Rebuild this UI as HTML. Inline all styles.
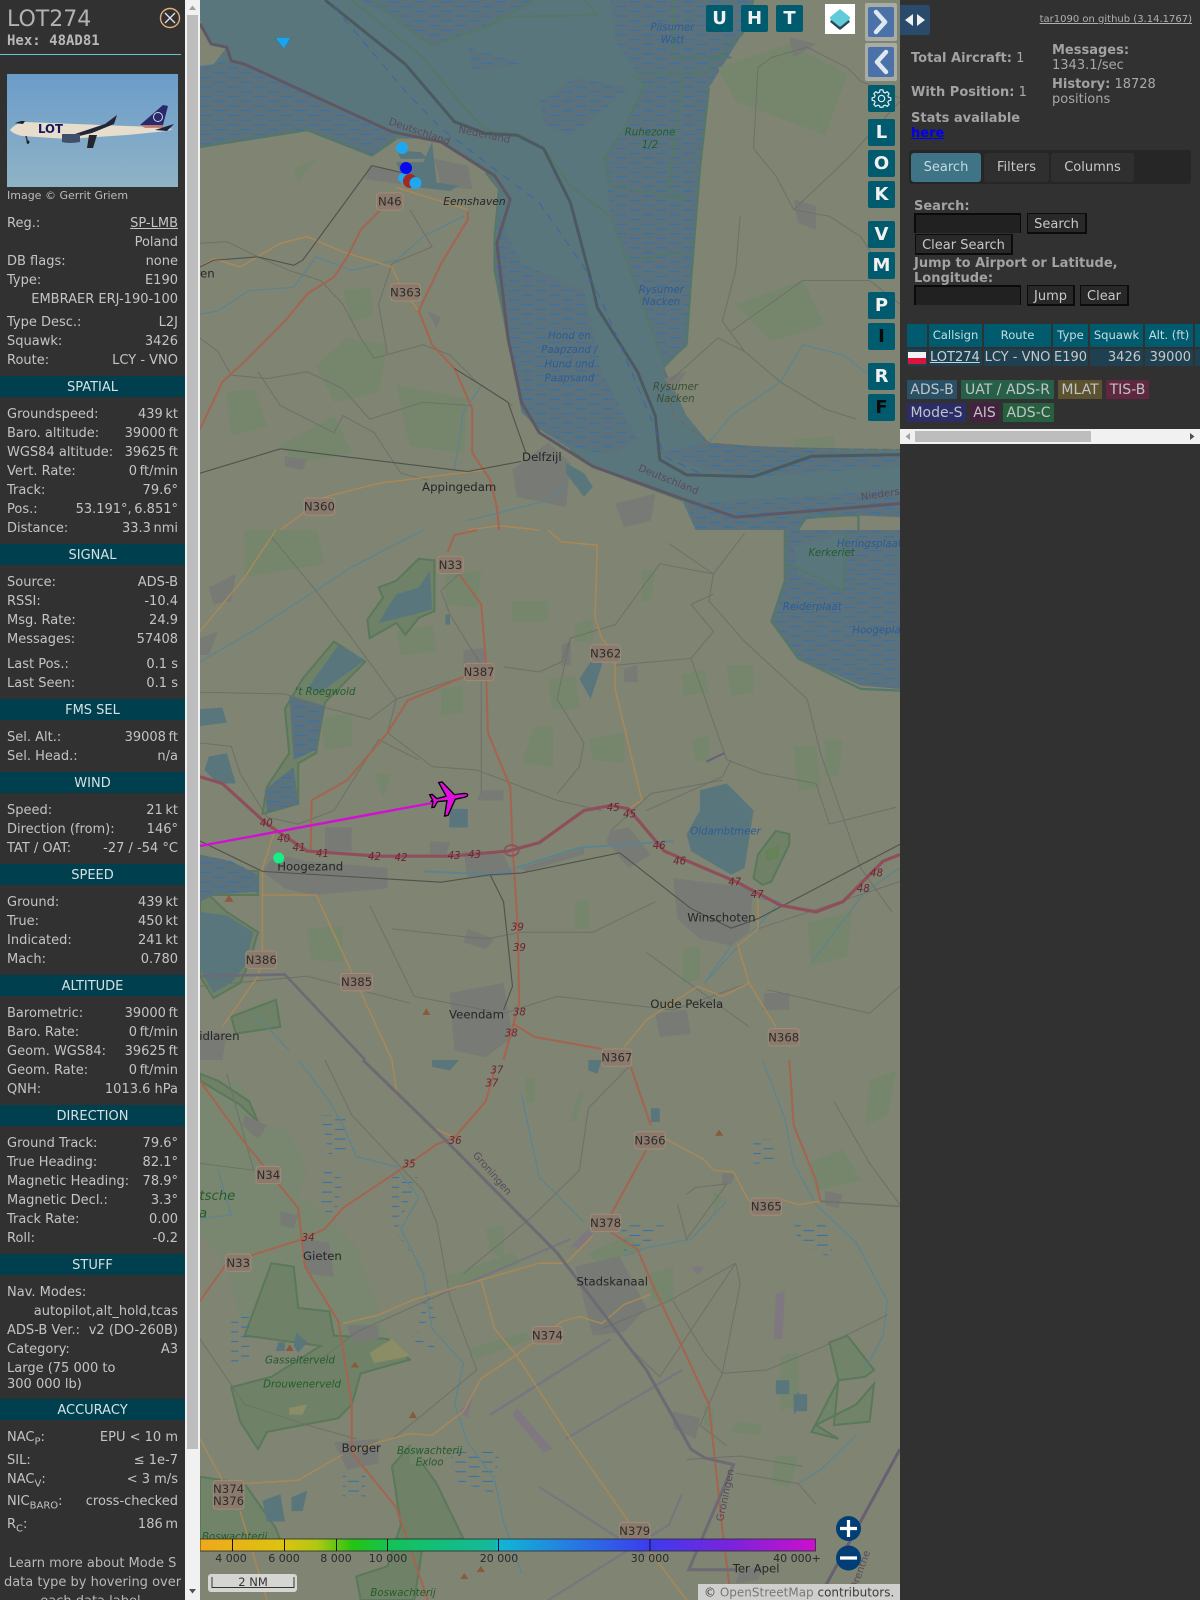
<!DOCTYPE html>
<html><head><meta charset="utf-8"><title>tar1090</title>
<style>
html,body{margin:0;padding:0;width:1200px;height:1600px;overflow:hidden;background:#313131;font-family:"DejaVu Sans","Liberation Sans",sans-serif;font-size:13px;color:#c8c8c8}
#map{position:absolute;left:200px;top:0;width:700px;height:1600px;overflow:hidden;background:#7f8473}
#map svg{position:absolute;left:-200px;top:0}
polyline,path,polygon{vector-effect:non-scaling-stroke}
.m{fill:none;stroke:#8f4f5a;stroke-width:3.2}
.r{fill:none;stroke:#a5644f;stroke-width:2}
.o{fill:none;stroke:#a98858;stroke-width:1.5}
.p{fill:none;stroke:#50524c;stroke-width:1.1}
.g{fill:none;stroke:#6d7168;stroke-width:1}
.b{fill:none;stroke:#5e5864;stroke-width:3}
.c{fill:none;stroke:#6e6a74;stroke-width:2.6}
.h{fill:none;stroke:#4a5a60;stroke-width:3}
.t{fill:none;stroke:#55776a;stroke-width:2.2}
.w{fill:none;stroke:#5b8490;stroke-width:1.2}
.d{fill:none;stroke:#3f62a6;stroke-width:1;stroke-dasharray:8 7}
.wt{fill:#5a767d}
.fl{fill:url(#hatch)}
.gr{fill:#76866c}
.ff{fill:#6f8267;stroke:#5a785a;stroke-width:2}
.ur{fill:#787a76}
.sh rect{fill:#8c7b6c;stroke:#a08b78}
text{font-family:"DejaVu Sans","Liberation Sans",sans-serif}
.pl{font-size:11.5px;fill:#262626;text-anchor:middle}
.wl{font-size:10px;font-style:italic;fill:#2f5b92;text-anchor:middle}
.fo{font-size:10px;font-style:italic;fill:#245c2a;text-anchor:middle}
.bo{font-size:10px;fill:#5a4a5a;text-anchor:middle}
.mn{font-size:10px;font-style:italic;fill:#6d2430;text-anchor:middle}
.st{font-size:11.5px;fill:#2c2c2c;text-anchor:middle}
#side{position:absolute;left:0;top:0;width:185px;height:1600px;background:#313131;overflow:hidden}
.k{position:absolute;left:7px;width:171px;height:17px;line-height:17px;margin-top:1px;display:flex;justify-content:space-between;white-space:nowrap;color:#c4c4c4}
.k span:last-child{text-align:right}
.band{position:absolute;left:0;width:185px;height:21px;line-height:23px;background:#003f4e;color:#d2e2e4;text-align:center;overflow:hidden}
sub{font-size:10px;line-height:0}
#sb{position:absolute;left:185px;top:0;width:15px;height:1600px;background:#f1f1f1}
#sb i{position:absolute;left:2px;top:15px;width:11px;height:1434px;background:#bdbdbd;display:block}
.tb{position:absolute;width:27px;height:27px;background:#005b6e;border-radius:2px;color:#f0f0f0;font:bold 18px/27px "DejaVu Sans",sans-serif;text-align:center}
.dk{color:#0a0a0a}
#pan{position:absolute;left:900px;top:0;width:300px;height:1600px;background:#313131}
.a{position:absolute;white-space:nowrap}
.lb{font-weight:bold;color:#a2a2a2}
.btn{position:absolute;background:#282828;border:solid #0c0c0c;border-width:1px 2px 2px 1px;box-sizing:border-box;color:#c8c8c8;text-align:center;line-height:21px}
.inp{position:absolute;background:#212121;border:solid #0a0a0a;border-width:2px 1px 0 2px;box-sizing:border-box;width:107px;height:20px}
.th{position:absolute;top:324px;height:23px;line-height:23px;background:#005b6e;color:#c6dcdf;text-align:center;font-size:11.6px}
.td{position:absolute;top:349px;height:17px;line-height:17px;background:#1f4050;color:#c8c8c8;white-space:nowrap;box-sizing:border-box}
.lg{position:absolute;height:19px;line-height:21px;text-align:center;font-size:14px;color:#bfc4c8;overflow:hidden}
</style></head><body>
<div id="map">
<svg width="1200" height="1600" viewBox="0 0 1200 1600" xmlns="http://www.w3.org/2000/svg">
<defs><pattern id="hatch" patternUnits="userSpaceOnUse" width="60" height="28">
<rect width="60" height="28" fill="#5b727c"/><rect x="2" y="4" width="24" height="3" fill="#3470ac"/><rect x="32" y="18" width="24" height="3" fill="#3470ac"/></pattern>
<pattern id="hatch2" patternUnits="userSpaceOnUse" width="60" height="28">
<rect x="2" y="4" width="24" height="3" fill="#3470ac"/><rect x="32" y="18" width="24" height="3" fill="#3470ac"/></pattern></defs>
<rect width="1200" height="1600" fill="#7f8473"/>

<!-- ZONE 1 -->
<g transform="translate(200,0) scale(.4464,.338)">
<path class="wt" d="M0 0H1240L1215 100 1190 130 1140 260 1120 500 1100 830 1090 1020 1040 1090 1090 1230 1140 1310 1230 1320 1568 1330V1530L1480 1525 1360 1535 1340 1568H1110L1080 1480 1000 1440 880 1380 830 1330 760 1270 720 1220 690 1000 660 800 660 700 670 560 640 510 540 420 495 410 440 410 385 460 240 385 0 435Z"/>
<path fill="#7f8473" d="M0 60L25 130 60 140 30 190 0 195Z"/>
<path class="fl" d="M0 200L60 180 100 190 400 380 440 405 385 460 240 385 0 435Z"/>
<path class="fl" d="M360 0H750L650 80 520 135 440 60Z"/>
<path class="fl" d="M920 0H1240L1215 100 1140 260 1120 500 1100 830 1090 1020 1040 1085 960 770 920 640 905 470 950 380 995 250 930 120Z"/>
<path class="fl" d="M600 140L720 190 610 210ZM760 300L840 230 960 260 900 330 830 400 770 370Z"/>
<path class="fl" d="M670 640L720 780 860 860 900 1100 980 1300 920 1345 850 1330 760 1270 720 1210 690 1000 660 800Z"/>
<path class="fl" d="M1140 1310L1568 1350V1380L1250 1410 1130 1390 1030 1340Z"/>
<path class="fl" d="M1090 1490L1568 1450V1530L1480 1525 1360 1535 1340 1568H1110Z"/>
<path class="gr" d="M1160 200L1320 130 1450 220 1400 400 1300 350 1200 300ZM1200 900L1350 830 1400 960 1280 1010ZM1330 1300L1420 1290 1420 1325 1330 1320ZM260 1080L330 1000 420 1020 400 1160 300 1190ZM320 860L380 850 390 930 340 950ZM440 1140L600 1180 590 1340 470 1320ZM60 1160L120 1150 150 1260 70 1290ZM180 1320L300 1230 340 1340 220 1370ZM210 500L260 470 220 540Z"/>
<path class="ur" d="M380 490L450 510 450 545 370 530ZM525 470L600 490 610 560 540 550ZM700 1390L780 1310 830 1370 820 1500 710 1470ZM1040 1120L1090 1100 1060 1160ZM1330 590L1380 610 1380 680 1340 660ZM1320 110L1380 130 1330 170ZM930 1490L1020 1460 1010 1540 950 1560ZM190 1350L240 1360 230 1390 190 1380ZM510 920L540 940 530 970Z"/>
<path class="wt" d="M440 480L500 480 520 420 530 540 580 550 560 565 460 550ZM440 445L495 450 510 470 450 470ZM820 1370L860 1400 880 1440 860 1470 820 1400Z"/>
<polyline class="g" points="0,720 60,715 130,760 200,800 270,830 320,900 360,1000 390,1060 500,1020 560,1050 620,1130 700,1200"/>
<polyline class="g" points="0,1000 40,1040 70,1110 150,1120 240,1100 320,1150 380,1240 500,1190 610,1200"/>
<polyline class="g" points="130,1100 180,1200 300,1280 320,1230 390,1280 450,1400 510,1420"/>
<polyline class="g" points="470,620 520,730 430,780 400,900 420,1050"/>
<polyline class="g" points="1210,640 1200,800 1170,950 1220,1040 1300,1130 1400,1210 1470,1240"/>
<polyline class="g" points="1190,980 1350,830 1500,830 1568,900"/>
<polyline class="g" points="1240,440 1250,200 1280,170 1360,140 1450,200 1480,240 1568,290"/>
<polyline class="g" points="1240,440 1290,520 1330,620 1410,640 1480,700 1510,760"/>
<polyline class="g" points="1330,620 1450,470 1568,300"/>
<polyline class="g" points="1050,1130 1160,1000 1220,1040"/>
<polyline class="w" points="590,640 500,700 440,770 340,800 260,760 210,850 110,860 40,920 0,930"/>
<polyline class="w" points="630,1140 590,1220 570,1390"/>
<polyline class="w" points="1140,1310 1190,1230 1300,1130 1350,1020 1440,1050 1520,1130"/>
<polyline class="w" points="600,1540 780,1480 820,1440"/>
<polyline class="t" points="340,0 500,170 580,300 640,385 720,400 770,440 830,550 920,640 1040,1080 1090,1020"/>
<polyline class="t" points="0,435 240,385 385,460 440,410"/>
<polyline class="t" points="1080,1480 1000,1440 880,1380 830,1330"/>
<polyline class="t" points="750,0 650,75 520,135 440,60 390,0"/>
<polyline class="t" points="660,50 890,45 860,0"/>
<polyline class="t" points="970,220 1130,215 1190,130 1215,100 1240,0"/>
<polyline class="t" points="970,220 995,250 950,380 905,470 920,550 1090,590"/>
<polyline class="t" points="1080,230 1050,560 1090,590"/>
<polyline class="t" points="1060,0 1060,170 1190,170"/>
<polyline class="t" points="960,770 1090,745"/>
<polyline class="t" points="640,510 670,560 660,700 660,800 690,1000"/>
<polyline class="t" points="1140,260 1120,500 1100,830 1090,1020"/>
<polyline class="t" points="1340,1568 1360,1525 1475,1525 1475,1568"/>
<polyline class="o" points="440,555 600,620"/>
<polyline class="o" points="0,790 30,765 90,790 180,720 240,700 320,745 430,790 450,850 490,920"/>
<polyline class="o" points="180,1568 280,1470 400,1430 640,1390"/>
<polyline class="o" points="600,1568 670,1555 760,1568"/>
<polyline class="r" points="405,620 360,680 330,760 300,820 240,870 190,950 100,1070 50,1130 0,1270"/>
<polyline class="r" points="600,625 600,650 540,780 490,920 520,1020 570,1090 610,1210 610,1340 650,1420 665,1500 670,1568"/>
<polyline class="p" points="385,490 450,510"/>
<polyline class="p" points="385,490 230,770 210,785 130,760 30,770 0,790"/>
<polyline class="p" points="0,1400 180,1328 600,1395 720,1365"/>
<polyline class="p" points="570,1090 690,1190 730,1340"/>
<polyline class="b" points="0,70 25,130 60,140 70,180 100,190 430,390 540,420 660,520 695,590 665,720 690,1000 720,1190 760,1280 880,1380 1090,1480 1200,1530 1568,1490"/>
<polyline class="h" points="280,0 460,190 570,360 640,395 710,400 770,440 830,600 880,850 890,910 980,1100 1020,1230 1030,1360 1090,1405 1240,1410 1370,1350 1568,1345"/>
<polyline class="d" points="300,20 460,270 540,380 760,600 860,790 900,890 1020,1270 1040,1350 1120,1400"/>
<polyline class="c" points="1040,1090 1060,1230 1140,1310 1250,1325 1568,1330" style="stroke:#6b6a5e;stroke-width:1;stroke-dasharray:10 4"/>
</g>

<!-- ZONE 2 -->
<g transform="translate(200,530) scale(.4464,.338)">
<path class="wt" d="M1310 0H1568V470L1480 460 1340 380 1280 270 1310 150Z"/>
<path class="fl" d="M1310 0H1568V470L1480 460 1340 380 1280 270 1310 150Z"/>
<path fill="#5a767d" d="M1330 50L1440 10 1440 180 1340 130Z"/>
<polyline class="t" points="1310,0 1310,150 1280,270 1340,380 1480,470 1568,475"/>
<polyline class="t" points="1320,100 1440,180 1450,10"/>
<path class="gr" d="M550 130L630 120 620 230 550 220ZM700 210L780 210 780 270 700 270ZM540 470L590 460 590 540 540 550ZM750 580L790 580 790 700 720 690ZM1080 430L1130 410 1140 480 1080 490ZM1180 400L1240 400 1240 480 1190 490ZM1100 620L1140 610 1140 690 1110 680ZM870 620L950 600 950 690 880 680ZM990 120L1020 120 1010 210 990 210ZM1330 640L1380 640 1390 760 1340 770ZM1400 620L1440 620 1430 730 1400 730ZM100 0L260 0 280 100 100 140ZM440 300L520 280 530 360 450 370ZM390 720L430 720 410 790ZM840 1100L870 1090 870 1180 840 1180ZM1360 1160L1460 1130 1450 1260 1370 1290ZM240 1180L320 1170 320 1280 250 1270ZM1080 1240L1120 1230 1120 1330 1080 1340ZM840 280L880 260 880 330 840 330ZM780 440L840 430 850 530 790 530ZM270 560L340 540 340 640 280 650Z"/>
<path class="ur" d="M590 355L640 350 640 410 590 410ZM20 170L80 130 70 210 30 220ZM0 320L40 300 20 370 0 370ZM240 980L420 1000 420 1060 250 1080 190 1060 140 1010 170 960ZM280 880L340 880 340 950 280 950ZM515 920L560 925 550 970 515 965ZM590 950L680 960 700 1020 600 1030ZM720 1000L860 940 860 960 730 1010ZM920 890L960 880 1010 960 960 1000 910 920ZM1060 1030L1240 1060 1230 1190 1190 1230 1120 1210 1070 1150ZM560 1370L680 1340 700 1500 640 1560 570 1540ZM600 1180L660 1210 640 1240 590 1220ZM1020 1430L1090 1420 1100 1490 1030 1500ZM1265 1370L1320 1370 1320 1420 1260 1420ZM0 1490L60 1490 50 1568 0 1568ZM810 340L830 330 830 400 810 400ZM950 410L980 400 980 450 950 450ZM630 770L680 770 680 800 620 800Z"/>
<path class="ff" d="M410 200L400 170 440 150 490 85 525 90 525 240 490 260 460 310 440 275 380 320 375 265Z"/>
<path class="wt" d="M420 230L440 190 490 170 515 120 520 235 480 250 400 275Z"/>
<path class="ff" d="M300 330L370 390 280 510 270 580 260 660 220 690 220 810 140 840 150 760 200 660 190 530 230 440Z"/>
<path class="wt" d="M310 340L370 385 270 480 240 470ZM0 530L50 525 60 570 0 580ZM20 670L60 660 80 750 40 750 10 710Z"/>
<path class="fl" d="M200 490L280 520 260 650 210 680ZM145 770L210 700 220 810 150 835Z"/>
<path class="wt" d="M560 825L600 825 600 880 558 880ZM850 440L890 360 905 380 875 500ZM550 250L560 250 560 280 550 280Z"/>
<path class="wt" d="M1120 770L1180 750 1240 830 1220 1000 1190 1020 1100 950 1090 900 1120 830Z"/>
<path class="ff" d="M1240 1030L1250 960 1290 890 1320 900 1320 930 1280 1040 1260 1050Z"/>
<path fill="#668258" d="M1265 950L1300 930 1295 970 1270 980Z"/>
<path class="ff" d="M0 1000L130 1010 130 1080 20 1080 60 1130 130 1190 110 1280 90 1340 30 1385 0 1320Z"/>
<path class="wt" d="M0 1130L60 1140 120 1190 100 1290 70 1340 30 1370 0 1300Z"/>
<path class="fl" d="M0 960L70 980 130 1020 130 1070 30 1080 0 1100Z"/>
<path class="ff" d="M70 1440L170 1390 180 1470 80 1490Z"/>
<polyline class="g" points="0,480 190,485 280,525 380,560 440,500 600,430"/>
<polyline class="g" points="160,20 260,180 340,320 440,500 420,600 520,700 620,710 800,800 900,830"/>
<polyline class="g" points="630,780 630,400 560,250 540,180 580,130"/>
<polyline class="g" points="680,405 760,420 810,390 830,320 930,280 1030,100 1150,130 1220,10"/>
<polyline class="g" points="1050,40 1150,130 1140,210 1220,330 1360,500 1390,660 1480,1000 1550,1130"/>
<polyline class="g" points="830,320 800,500 860,630 850,700 800,780"/>
<polyline class="g" points="1100,380 1180,680 1260,720 1380,750 1410,870 1560,820"/>
<polyline class="g" points="930,400 1100,380 1150,300 1100,220 1150,190"/>
<polyline class="g" points="1000,830 1170,730 1190,680"/>
<polyline class="g" points="0,630 70,640 90,720 150,850 220,870 300,830 400,620 490,680"/>
<polyline class="g" points="430,1180 640,1210 720,1190 880,1190 1020,1100"/>
<polyline class="g" points="380,1110 480,1380 560,1400 680,1430 800,1380 1060,1420 1230,1340"/>
<polyline class="g" points="1250,1180 1568,1040"/>
<polyline class="g" points="1270,1360 1500,1430 1568,1350"/>
<polyline class="g" points="0,1350 240,1320 470,1400"/>
<polyline class="g" points="1000,1250 1230,1470"/>
<polyline class="g" points="920,890 1010,780 1170,740"/>
<polyline class="w" points="0,390 130,290 340,110 500,0"/>
<polyline class="w" style="stroke-width:2" points="500,1010 660,1020 850,940 1060,920"/>
<polyline class="w" points="1190,1230 1130,1340 1300,1100 1250,1090"/>
<polyline class="w" points="1370,1280 1490,1070 1568,1000"/>
<polyline class="w" points="120,1430 200,1540"/>
<polyline class="o" points="0,300 100,140 170,0"/>
<polyline class="o" points="780,0 810,35 890,45 885,260 900,320 930,370 930,470 990,800 960,825"/>
<polyline class="o" points="170,880 140,1000 140,1250 130,1320 50,1470"/>
<polyline class="o" points="140,1080 260,1080 330,1280 430,1568"/>
<polyline class="o" points="1250,1090 1250,1180 1205,1230 1230,1340 1290,1470"/>
<polyline class="o" points="1230,1340 1170,1380 1115,1350 1000,1450 950,1530"/>
<polyline class="r" points="555,65 570,15 620,0"/>
<polyline class="r" points="580,130 630,220 640,380 645,600 695,760 700,930 712,1180 715,1400 680,1568"/>
<polyline class="r" points="590,435 465,505 420,600 330,740 250,800 248,950"/>
<polyline class="r" points="700,1460 750,1500 900,1535"/>
<polyline class="p" points="0,920 140,1010 540,1042 650,1020 720,1015 940,955 1100,1120 1190,1178 1250,1150 1568,930"/>
<polyline class="p" points="650,1020 680,1100 700,1350 680,1420"/>
<polyline class="c" points="0,1320 190,1315 370,1568"/>
<polyline class="c" style="stroke:#6a5f80;stroke-width:2" points="1135,685 1175,660"/>
<polyline class="m" points="0,730 50,750 150,870 240,950 400,965 560,965 690,950 760,925 860,830 920,815 960,825 1040,950 1200,1040 1300,1110 1380,1130 1440,1100 1530,980 1568,960"/>
<circle cx="698" cy="948" r="16" fill="none" stroke="#8f4f5a" stroke-width="1.6" vector-effect="non-scaling-stroke"/>
<path fill="#8a5a3a" d="M55 1100L75 1100 65 1080ZM498 1435L516 1435 507 1415Z"/>
</g>

<!-- ZONE 3 -->
<g transform="translate(200,1060) scale(.4464,.3444)">
<path class="ff" d="M0 80L90 60 130 180 200 210 240 320 220 400 280 440 350 540 420 800 470 870 360 910 340 1000 310 1040 150 1080 130 1130 90 1050 70 950 160 920 270 830 300 740 220 720 210 600 160 590 100 790 60 600 0 500Z" style="fill:#7a8770;stroke:none"/>
<path class="ff" d="M100 800L160 590 210 600 220 720 290 730 300 800 420 810 470 870 360 910 340 1000 310 1040 150 1080 130 1130 90 1050 70 950 160 920 270 830Z"/>
<path fill="#8a8d66" d="M380 850L430 810 470 860 390 880ZM200 1010L240 1000 230 1030 200 1030Z"/>
<path class="ff" d="M430 1180L470 1120 530 1230 590 1390 500 1400 480 1568 360 1568 350 1500 420 1470 450 1350Z"/>
<path class="ff" d="M0 1210L100 1230 170 1360 180 1395 0 1395ZM1410 820L1450 800 1510 900 1490 920 1430 930 1420 1060 1500 1050 1510 940 1470 1000 1380 1060 1430 1100 1370 1080 1430 930Z" style="fill:#718368"/>
<path class="ff" d="M0 60L90 130 130 180 110 120 40 60 0 40Z"/>
<path class="gr" d="M550 630L700 560 720 590 560 660ZM600 840L730 790 740 810 620 870ZM870 560L960 510 990 550 890 590ZM1010 620L1060 600 1060 700 1010 700ZM1200 1050L1260 1060 1250 1090 1190 1080ZM640 490L680 480 680 580 650 550ZM1150 380L1170 400 1150 450ZM850 90L860 100 840 180 830 180ZM730 50L750 50 750 120 730 120ZM1500 60L1560 30 1540 160 1490 190ZM1300 860L1340 850 1340 1000 1300 1020ZM470 1120L500 1130 490 1180 470 1170ZM1130 1000L1150 1010 1150 1070 1130 1060ZM1290 1150L1340 1150 1320 1240 1280 1230ZM1360 300L1440 260 1480 350 1380 380Z"/>
<path class="ur" d="M840 600L940 570 1000 720 950 790 880 800ZM230 520L290 530 300 630 240 620ZM100 160L150 190 130 230 95 190ZM330 770L400 770 400 810 340 820ZM300 1110L400 1100 400 1170 330 1190ZM1060 1020L1120 1040 1110 1100 1060 1070ZM1170 330L1200 330 1190 360 1170 360ZM1400 380L1440 390 1430 430 1400 420ZM180 440L220 450 210 490 180 480ZM1210 1480L1260 1470 1250 1510 1200 1520Z"/>
<path fill="#7f7880" d="M830 540L870 490 880 510 850 550ZM710 1010L790 1130 770 1140 700 1030ZM1290 680L1310 670 1305 810 1285 810ZM1100 600L1130 600 1115 625ZM580 1020L610 980 600 1040Z"/>
<path class="wt" d="M1010 140L1030 140 1030 180 1010 180ZM1290 930L1320 930 1320 970 1290 970ZM1330 970L1360 970 1360 1020 1330 1020ZM175 820L190 820 190 845 170 845ZM215 790L240 820 220 850 210 830ZM140 1280L180 1260 190 1340 150 1340ZM205 1270L240 1250 230 1310 205 1310ZM870 0L900 0 890 40 870 30ZM520 0L580 0 560 30 520 20ZM1340 960L1350 1000 1330 1030Z"/>
<path style="fill:url(#hatch2)" d="M270 160L330 160 330 280 290 280ZM280 300L320 350 300 470 270 420ZM430 330L490 330 440 500 500 620 530 760 470 800 540 840 480 830 510 640 430 470ZM70 740L110 740 110 880 70 880ZM560 1130L670 1130 660 1260 570 1220ZM320 1200L370 1200 370 1270 320 1270ZM1240 230L1280 230 1290 300 1240 300ZM1330 470L1400 470 1420 580 1340 530ZM940 480L1040 480 1000 540 950 560Z"/>
<polyline class="w" points="220,0 290,120 320,190 350,280 440,310 490,400 450,490 500,620 520,780 590,880 570,1000 600,1110 660,1220 680,1340 720,1490"/>
<polyline class="w" points="720,100 760,340 860,470"/>
<polyline class="w" points="1260,0 1310,170 1330,300 1380,420 1470,530 1540,700 1530,800 1490,900"/>
<polyline class="w" points="1180,410 1100,520 1000,545 950,570"/>
<polyline class="w" points="1470,1090 1390,1190 1340,1230"/>
<polyline class="w" points="0,460 70,450 40,320"/>
<polyline class="g" points="1200,590 1210,650 1170,910 1270,900 1400,830 1540,740"/>
<polyline class="g" points="1170,910 1120,1060 1180,1120"/>
<polyline class="g" points="950,820 1030,920 1200,590 1050,700 900,780"/>
<polyline class="g" points="1090,1160 1210,1150 1350,1180"/>
<polyline class="g" points="1060,700 1130,850 1170,910"/>
<polyline class="g" points="540,680 350,790 270,870"/>
<polyline class="g" points="0,810 100,1000 240,1060 350,1100"/>
<polyline class="g" points="1090,390 1110,370 1180,360 1090,520 1070,420"/>
<polyline class="g" points="870,140 960,20"/>
<polyline class="g" points="870,140 850,320 740,460 590,620"/>
<polyline class="g" points="280,0 340,160 500,380 530,470 560,690 620,900 480,1050 430,1100"/>
<polyline class="g" points="1420,120 1500,300 1568,420"/>
<polyline class="g" points="1390,410 1568,425" style="stroke-width:1.6"/>
<polyline class="g" points="1200,1200 1250,1210 1340,1230 1380,1290"/>
<polyline class="g" points="0,300 120,320 60,40"/>
<polyline class="g" style="stroke:#747680;stroke-width:2.4" points="650,1030 920,810"/>
<polyline class="g" style="stroke:#747680;stroke-width:2" points="540,680 830,520"/>
<polyline class="g" style="stroke:#747680;stroke-width:2" points="780,1568 1050,1350 1080,1260"/>
<polyline class="g" style="stroke:#747680;stroke-width:2" points="760,1240 880,1340 1000,1440"/>
<polyline class="g" style="stroke:#747680;stroke-width:2" points="820,1100 1080,900"/>
<polyline class="g" style="stroke:#747680;stroke-width:1.6" points="1568,1130 1400,1530"/>
<polyline class="o" points="320,765 400,740 480,695 760,590 820,590 880,510"/>
<polyline class="o" points="630,640 660,780 710,860 830,1100 960,1340 1010,1430 1090,1568"/>
<polyline class="o" points="520,1090 590,1020 630,925 710,855 810,760 850,745 900,765 950,710 1010,680"/>
<polyline class="o" points="340,1140 400,1110 470,1085 520,1090"/>
<polyline class="o" points="100,1230 220,1220 320,1145"/>
<polyline class="o" points="0,1100 50,1220"/>
<polyline class="o" points="90,1310 150,1568"/>
<polyline class="o" points="520,195 570,225"/>
<polyline class="o" points="1045,230 1130,290 1150,320 1195,325 1230,410"/>
<polyline class="o" points="1305,405 1340,420 1390,410"/>
<polyline class="o" points="430,0 440,90"/>
<polyline class="r" points="0,60 100,240 220,430 235,600 310,760 340,1000 340,1140 440,1300 510,1568"/>
<polyline class="r" points="0,700 60,590 230,520 280,490 320,430 470,300 530,245 570,225 640,120 660,30"/>
<polyline class="r" points="965,20 1010,190"/>
<polyline class="r" points="1000,260 920,450"/>
<polyline class="r" points="920,500 980,550 1020,670 1090,860 1140,1000 1170,1360 1190,1568"/>
<polyline class="r" points="1320,0 1330,190 1380,350 1390,410"/>
<polyline class="c" style="stroke-width:3" points="365,0 540,220 800,560 1000,900 1100,1130 1130,1155 1195,1175 1095,1480 1200,1480"/>
<polyline class="c" style="stroke-width:3;stroke:#685f72" points="1568,1130 1400,1530"/>
<path fill="#8a5a3a" d="M1154 220L1172 220 1163 202ZM192 845L210 845 201 826ZM338 893L356 893 347 876ZM468 1040L486 1040 477 1020ZM583 1507L601 1507 592 1490ZM620 1487L638 1487 629 1468Z"/>
</g>

<!-- LABELS (screenshot-scale coordinates) -->
<g transform="scale(1.0204)">
<g class="sh">
<rect x="369" y="189" width="26" height="17" rx="3"/><rect x="383" y="278" width="29" height="17" rx="3"/>
<rect x="298" y="488" width="30" height="17" rx="3"/><rect x="429" y="545" width="25" height="17" rx="3"/>
<rect x="579" y="632" width="29" height="17" rx="3"/><rect x="455" y="650" width="29" height="17" rx="3"/>
<rect x="241" y="932" width="30" height="17" rx="3"/><rect x="334" y="954" width="31" height="17" rx="3"/>
<rect x="590" y="1028" width="29" height="17" rx="3"/><rect x="753" y="1008" width="30" height="17" rx="3"/>
<rect x="622" y="1109" width="30" height="17" rx="3"/><rect x="251" y="1143" width="24" height="17" rx="3"/>
<rect x="736" y="1174" width="30" height="17" rx="3"/><rect x="579" y="1190" width="29" height="17" rx="3"/>
<rect x="221" y="1229" width="25" height="17" rx="3"/><rect x="522" y="1300" width="29" height="17" rx="3"/>
<rect x="209" y="1451" width="30" height="28" rx="3"/><rect x="607" y="1492" width="30" height="17" rx="3"/>
</g>
<text class="st" x="382" y="201.500">N46</text><text class="st" x="397.500" y="290.500">N363</text>
<text class="st" x="313" y="500.500">N360</text><text class="st" x="441.500" y="557.500">N33</text>
<text class="st" x="593.500" y="644.500">N362</text><text class="st" x="469.500" y="662.500">N387</text>
<text class="st" x="256" y="944.500">N386</text><text class="st" x="349.500" y="966.500">N385</text>
<text class="st" x="604.500" y="1040.500">N367</text><text class="st" x="768" y="1020.500">N368</text>
<text class="st" x="637" y="1121.500">N366</text><text class="st" x="263" y="1155.500">N34</text>
<text class="st" x="751" y="1186.500">N365</text><text class="st" x="593.500" y="1202.500">N378</text>
<text class="st" x="233.500" y="1241.500">N33</text><text class="st" x="536.500" y="1312.500">N374</text>
<text class="st" x="224" y="1463">N374</text><text class="st" x="224" y="1475">N376</text>
<text class="st" x="622" y="1504.500">N379</text>

<text class="pl" x="450" y="481">Appingedam</text><text class="pl" x="531" y="452">Delfzijl</text>
<text class="pl" x="304" y="853">Hoogezand</text><text class="pl" x="707" y="903">Winschoten</text>
<text class="pl" x="467" y="998">Veendam</text><text class="pl" x="673" y="988">Oude Pekela</text>
<text class="pl" x="316" y="1235">Gieten</text><text class="pl" x="600" y="1260">Stadskanaal</text>
<text class="pl" x="354" y="1423">Borger</text><text class="pl" x="741" y="1541">Ter Apel</text>
<text class="pl" x="215" y="1019">idlaren</text><text class="pl" x="201" y="272">ren</text>
<text class="pl" x="465" y="201" style="font-style:italic;font-size:10.5px">Eemshaven</text>

<g class="wl"><text x="558" y="332">Hond en</text><text x="558" y="346">Paapzand /</text><text x="558" y="360">Hund und</text><text x="558" y="374">Paapsand</text>
<text x="648" y="287">Rysumer</text><text x="648" y="299">Nacken</text><text x="659" y="30">Pilsumer</text><text x="659" y="42">Watt</text>
<text x="711" y="818">Oldambtmeer</text><text x="796" y="598">Reiderplaat</text><text x="852" y="536">Heringsplaat</text><text x="864" y="621">Hoogeplaat</text></g>
<g class="fo"><text x="637" y="133">Ruhezone</text><text x="637" y="145">1/2</text><text x="815" y="545">Kerkeriet</text><text x="319" y="681">'t Roegwold</text>
<text x="294" y="1336">Gasselterveld</text><text x="296" y="1360">Drouwenerveld</text><text x="421" y="1425">Boswachterij</text><text x="421" y="1436">Exloo</text>
<text x="230" y="1509">Boswachterij</text><text x="395" y="1564">Boswachterij</text><text x="213" y="1176" style="font-size:13px">tsche</text><text x="199" y="1193" style="font-size:13px">a</text></g>
<text class="fo" x="662" y="382" style="fill:#3b4f30">Rysumer</text><text class="fo" x="662" y="394" style="fill:#3b4f30">Nacken</text>

<text class="bo" transform="translate(410,132) rotate(19)">Deutschland</text>
<text class="bo" transform="translate(474,135) rotate(12)">Nederland</text>
<text class="bo" transform="translate(654,473) rotate(22)">Deutschland</text>
<text class="bo" transform="translate(866,487) rotate(-8)">Niedersa</text>
<text class="bo" transform="translate(480,1152) rotate(49)">Groningen</text>
<text class="bo" transform="translate(714,1466) rotate(-78)">Groningen</text>
<text class="bo" transform="translate(846,1540) rotate(-70)">Drenthe</text>

<g class="mn">
<text x="261" y="810">40</text><text x="278" y="825">40</text><text x="293" y="834">41</text><text x="316" y="840">41</text>
<text x="367" y="843">42</text><text x="393" y="844">42</text><text x="445" y="842">43</text><text x="465" y="841">43</text>
<text x="601" y="795">45</text><text x="617" y="801">45</text><text x="646" y="832">46</text><text x="666" y="847">46</text>
<text x="720" y="868">47</text><text x="742" y="880">47</text><text x="859" y="859">48</text><text x="846" y="874">48</text>
<text x="507" y="912">39</text><text x="509" y="932">39</text><text x="509" y="995">38</text><text x="501" y="1016">38</text>
<text x="487" y="1052">37</text><text x="482" y="1065">37</text><text x="446" y="1121">36</text><text x="401" y="1144">35</text><text x="302" y="1216">34</text>
</g>
</g>

<!-- track, aircraft, markers -->
<polyline points="200,846 432,803" fill="none" stroke="#d30fd3" stroke-width="2.400"/>
<path transform="translate(449,798) rotate(80)" d="M0-19C1.500-19 2-16 2-13L2.300-6 17 4V7.500L2.300 2.500 1.500 12 6.500 16V18.500L.8 16.500 0 18-.8 16.500-6.500 18.500V16L-1.500 12-2.300 2.500-17 7.500V4L-2.300-6-2-13C-2-16-1.500-19 0-19Z" fill="#e010e0" stroke="#000" stroke-width="1.300"/>
<circle cx="278.700" cy="858" r="5.500" fill="#17ee85"/>
<circle cx="403" cy="178" r="5" fill="#22a6ec"/>
<circle cx="410" cy="181" r="7" fill="#a02a24"/>
<circle cx="406" cy="168" r="6" fill="#0808ee"/>
<circle cx="415.500" cy="183" r="6" fill="#1fa8f0"/>
<circle cx="402" cy="148" r="6" fill="#1fa8f0"/>
<path d="M275 37.500H291L284 49Z" fill="#1ba4ee" stroke="#3b6f8c" stroke-width=".6"/>

<!-- colour bar -->
<defs><linearGradient id="cb" x1="200" x2="815" gradientUnits="userSpaceOnUse" y1="0" y2="0">
<stop offset="0" stop-color="#f0a81c"/><stop offset=".135" stop-color="#dcc310"/><stop offset=".19" stop-color="#b0c812"/><stop offset=".25" stop-color="#22c412"/><stop offset=".31" stop-color="#14c258"/><stop offset=".48" stop-color="#14b8a0"/><stop offset=".482" stop-color="#10b8d4"/><stop offset=".73" stop-color="#3c3cee"/><stop offset=".86" stop-color="#7824dc"/><stop offset="1" stop-color="#cc0fcc"/></linearGradient></defs>
<rect x="200" y="1539" width="615.500" height="12" fill="url(#cb)" stroke="#2a2a2a" stroke-width=".8"/>
<g stroke="#111" stroke-width="1"><path d="M232.500 1539V1551M284.500 1539V1551M336.500 1539V1551M387.500 1539V1551M498.500 1539V1551M650 1539V1551"/></g>
<g font-size="11" fill="#2a2a2a" text-anchor="middle"><text x="231" y="1562">4 000</text><text x="284" y="1562">6 000</text><text x="336" y="1562">8 000</text><text x="388" y="1562">10 000</text><text x="499" y="1562">20 000</text><text x="650" y="1562">30 000</text><text x="797" y="1562">40 000+</text></g>

<!-- scale line -->
<rect x="208" y="1574" width="89" height="18" rx="3" fill="#d5d5d2"/>
<path d="M212 1577V1587.500H294V1577" fill="none" stroke="#333" stroke-width="1"/>
<text x="253" y="1586" font-size="11.500" fill="#333" text-anchor="middle">2 NM</text>

<!-- zoom -->
<circle cx="848.500" cy="1528.500" r="12.500" fill="#003e75"/><path d="M840 1528.500H857M848.500 1520V1537" stroke="#fff" stroke-width="3.200" fill="none"/>
<circle cx="848.500" cy="1558" r="12.500" fill="#003e75"/><path d="M840 1558H857" stroke="#fff" stroke-width="3.200" fill="none"/>

<!-- attribution -->
<rect x="698" y="1584" width="202" height="16" fill="#cfcfcd"/>
<text x="704" y="1596.500" font-size="12" fill="#3c3c3c">© <tspan fill="#787878">OpenStreetMap</tspan> contributors.</text>
</svg>

<div class="tb" style="left:506px;top:5px">U</div><div class="tb" style="left:541px;top:5px">H</div><div class="tb" style="left:576px;top:5px">T</div>
<div style="position:absolute;left:625px;top:4px;width:30px;height:30px;background:#fff">
<svg style="position:absolute;left:0;top:0" width="30" height="30" viewBox="0 0 30 30"><path d="M6.500 17.500L15 24.500 23.500 17.500" fill="#2c4a55" stroke="#2c4a55" stroke-width="2.500" stroke-linejoin="round" stroke-linecap="round"/><path d="M15 7.500L23 14 15 20.500 7 14Z" fill="#62cbd9" stroke="#62cbd9" stroke-width="4" stroke-linejoin="round"/></svg></div>
<div style="position:absolute;left:665px;top:3px;width:32px;height:38px;background:#a9aca3;border-radius:2px"></div>
<div style="position:absolute;left:668px;top:7px;width:26px;height:30px;background:#4a72a8;border-radius:2px"><svg width="26" height="30" style="position:absolute;left:0;top:0"><path d="M8 5L17 15 8 25" fill="none" stroke="#dfe7ef" stroke-width="4.500" stroke-linecap="round" stroke-linejoin="round"/></svg></div>
<div style="position:absolute;left:665px;top:43px;width:32px;height:38px;background:#a9aca3;border-radius:2px"></div>
<div style="position:absolute;left:668px;top:47px;width:26px;height:30px;background:#4a72a8;border-radius:2px"><svg width="26" height="30" style="position:absolute;left:0;top:0"><path d="M18 5L9 15 18 25" fill="none" stroke="#dfe7ef" stroke-width="4.500" stroke-linecap="round" stroke-linejoin="round"/></svg></div>
<div class="tb" style="left:668px;top:85px"><svg width="27" height="27" viewBox="0 0 27 27" style="position:absolute;left:0;top:0"><circle cx="13.500" cy="13.500" r="3.200" fill="none" stroke="#e6eef0" stroke-width="1.200"/><path d="M11.800 4.500H15.200L15.800 7.300 17.800 8.200 20.200 6.700 22.500 9 21 11.400 21.800 13.300 24.500 13.900V16.800L21.800 17.400 21 19.300 22.500 21.700 20.200 24 17.800 22.500 15.800 23.300 15.200 25H11.800L11.200 23.300 9.200 22.500 6.800 24 4.500 21.700 6 19.300 5.200 17.400 2.500 16.800V13.900L5.200 13.300 6 11.400 4.500 9 6.800 6.700 9.200 8.200 11.200 7.300Z" fill="none" stroke="#e6eef0" stroke-width="1.200" stroke-linejoin="round" transform="translate(2,1) scale(.85)"/></svg></div>
<div class="tb" style="left:668px;top:119px">L</div><div class="tb" style="left:668px;top:150px">O</div><div class="tb" style="left:668px;top:181px">K</div>
<div class="tb" style="left:668px;top:221px">V</div><div class="tb" style="left:668px;top:252px">M</div>
<div class="tb" style="left:668px;top:292px">P</div><div class="tb dk" style="left:668px;top:323px">I</div>
<div class="tb" style="left:668px;top:363px">R</div><div class="tb dk" style="left:668px;top:394px">F</div>
</div>

<div id="side">
<div class="a" style="left:7px;top:7px;font-size:22px;line-height:26px;color:#b2b2b2">LOT274</div>
<div class="a" style="left:7px;top:33px;font:bold 14px/16px 'DejaVu Sans Mono',monospace;color:#b8b8b8">Hex: 48AD81</div>
<svg class="a" style="left:159px;top:7px" width="22" height="22"><circle cx="11" cy="11" r="9.500" fill="none" stroke="#dfae7a" stroke-width="1.400"/><path d="M6 6L16 16M16 6L6 16" stroke="#e6e6e6" stroke-width="1.300"/></svg>
<div class="a" style="left:0;top:54px;width:181px;height:1px;background:#5fc6d4"></div>
<svg class="a" style="left:7px;top:74px" width="171" height="113" viewBox="0 0 171 113">
<defs><linearGradient id="sky" x1="0" y1="0" x2="0" y2="1"><stop offset="0" stop-color="#6b9cc9"/><stop offset="1" stop-color="#8fb3c6"/></linearGradient></defs>
<rect width="171" height="113" fill="url(#sky)"/>
<path d="M3 56Q7 50 18 48L120 52 150 53 166 55 160 57 120 61 60 65 15 62Q6 60 3 56Z" fill="#e7ddcc"/>
<path d="M133 51L156 31 161 32 156 51Z" fill="#2a2a6a"/><circle cx="151" cy="43" r="4.500" fill="none" stroke="#cfd4e6" stroke-width="1"/>
<path d="M133 51H156V54H138Z" fill="#c06a5c" opacity=".75"/>
<path d="M148 56L167 50 160 57Z" fill="#20203a"/>
<path d="M62 62L98 50 110 41 107 50 85 59 68 63Z" fill="#25253a"/>
<path d="M55 60H73V68Q62 70 55 68Z" fill="#41506a"/>
<path d="M82 61L90 61 86 74 80 74Z" fill="#25252c"/>
<path d="M19 62L21 70" stroke="#333" stroke-width="1.500"/><circle cx="21" cy="68" r="1.500" fill="#222"/>
<text x="31" y="59" font-size="12" font-weight="bold" fill="#17175a" textLength="25" lengthAdjust="spacingAndGlyphs">LOT</text>
<path d="M8 49L14 47H18L16 50Z" fill="#1c2030"/>
</svg>
<div class="a" style="left:7px;top:189px;font-size:11px;line-height:14px;color:#bcbcbc">Image © Gerrit Griem</div>

<div class="k" style="top:214px"><span>Reg.:</span><span style="text-decoration:underline">SP-LMB</span></div>
<div class="k" style="top:233px"><span></span><span>Poland</span></div>
<div class="k" style="top:252px"><span>DB flags:</span><span>none</span></div>
<div class="k" style="top:271px"><span>Type:</span><span>E190</span></div>
<div class="k" style="top:290px"><span></span><span>EMBRAER ERJ-190-100</span></div>
<div class="k" style="top:313px"><span>Type Desc.:</span><span>L2J</span></div>
<div class="k" style="top:332px"><span>Squawk:</span><span>3426</span></div>
<div class="k" style="top:351px"><span>Route:</span><span>LCY - VNO</span></div>

<div class="band" style="top:376px">SPATIAL</div>
<div class="k" style="top:405px"><span>Groundspeed:</span><span>439&#8201;kt</span></div>
<div class="k" style="top:424px"><span>Baro. altitude:</span><span>39000&#8201;ft</span></div>
<div class="k" style="top:443px"><span>WGS84 altitude:</span><span>39625&#8201;ft</span></div>
<div class="k" style="top:462px"><span>Vert. Rate:</span><span>0&#8201;ft/min</span></div>
<div class="k" style="top:481px"><span>Track:</span><span>79.6°</span></div>
<div class="k" style="top:500px"><span>Pos.:</span><span>53.191°,&#8201;6.851°</span></div>
<div class="k" style="top:519px"><span>Distance:</span><span>33.3&#8201;nmi</span></div>

<div class="band" style="top:544px">SIGNAL</div>
<div class="k" style="top:573px"><span>Source:</span><span>ADS-B</span></div>
<div class="k" style="top:592px"><span>RSSI:</span><span>-10.4</span></div>
<div class="k" style="top:611px"><span>Msg. Rate:</span><span>24.9</span></div>
<div class="k" style="top:630px"><span>Messages:</span><span>57408</span></div>
<div class="k" style="top:655px"><span>Last Pos.:</span><span>0.1 s</span></div>
<div class="k" style="top:674px"><span>Last Seen:</span><span>0.1 s</span></div>

<div class="band" style="top:699px">FMS SEL</div>
<div class="k" style="top:728px"><span>Sel. Alt.:</span><span>39008&#8201;ft</span></div>
<div class="k" style="top:747px"><span>Sel. Head.:</span><span>n/a</span></div>

<div class="band" style="top:772px">WIND</div>
<div class="k" style="top:801px"><span>Speed:</span><span>21&#8201;kt</span></div>
<div class="k" style="top:820px"><span>Direction (from):</span><span>146°</span></div>
<div class="k" style="top:839px"><span>TAT / OAT:</span><span>-27 / -54 °C</span></div>

<div class="band" style="top:864px">SPEED</div>
<div class="k" style="top:893px"><span>Ground:</span><span>439&#8201;kt</span></div>
<div class="k" style="top:912px"><span>True:</span><span>450&#8201;kt</span></div>
<div class="k" style="top:931px"><span>Indicated:</span><span>241&#8201;kt</span></div>
<div class="k" style="top:950px"><span>Mach:</span><span>0.780</span></div>

<div class="band" style="top:975px">ALTITUDE</div>
<div class="k" style="top:1004px"><span>Barometric:</span><span>39000&#8201;ft</span></div>
<div class="k" style="top:1023px"><span>Baro. Rate:</span><span>0&#8201;ft/min</span></div>
<div class="k" style="top:1042px"><span>Geom. WGS84:</span><span>39625&#8201;ft</span></div>
<div class="k" style="top:1061px"><span>Geom. Rate:</span><span>0&#8201;ft/min</span></div>
<div class="k" style="top:1080px"><span>QNH:</span><span>1013.6 hPa</span></div>

<div class="band" style="top:1105px">DIRECTION</div>
<div class="k" style="top:1134px"><span>Ground Track:</span><span>79.6°</span></div>
<div class="k" style="top:1153px"><span>True Heading:</span><span>82.1°</span></div>
<div class="k" style="top:1172px"><span>Magnetic Heading:</span><span>78.9°</span></div>
<div class="k" style="top:1191px"><span>Magnetic Decl.:</span><span>3.3°</span></div>
<div class="k" style="top:1210px"><span>Track Rate:</span><span>0.00</span></div>
<div class="k" style="top:1229px"><span>Roll:</span><span>-0.2</span></div>

<div class="band" style="top:1254px">STUFF</div>
<div class="k" style="top:1283px"><span>Nav. Modes:</span><span></span></div>
<div class="k" style="top:1302px"><span></span><span>autopilot,alt_hold,tcas</span></div>
<div class="k" style="top:1321px"><span>ADS-B Ver.:</span><span>v2 (DO-260B)</span></div>
<div class="k" style="top:1340px"><span>Category:</span><span>A3</span></div>
<div class="k" style="top:1359px"><span>Large (75 000 to</span><span></span></div>
<div class="k" style="top:1375px"><span>300 000 lb)</span><span></span></div>

<div class="band" style="top:1399px">ACCURACY</div>
<div class="k" style="top:1428px"><span>NAC<sub>P</sub>:</span><span>EPU &lt; 10 m</span></div>
<div class="k" style="top:1451px"><span>SIL:</span><span>≤ 1e-7</span></div>
<div class="k" style="top:1470px"><span>NAC<sub>V</sub>:</span><span>&lt; 3 m/s</span></div>
<div class="k" style="top:1492px"><span>NIC<sub>BARO</sub>:</span><span>cross-checked</span></div>
<div class="k" style="top:1515px"><span>R<sub>C</sub>:</span><span>186&#8201;m</span></div>
<div class="a" style="left:0;top:1554px;width:185px;text-align:center;line-height:19px;color:#b8b8b8;white-space:normal">Learn more about Mode S<br>data type by hovering over<br>each data label.</div>
</div>

<div id="sb"><i></i>
<svg width="15" height="1600" style="position:absolute;left:0;top:0"><path d="M4 10H11L7.500 5.500Z" fill="#a0a0a0"/><path d="M4 1589H11L7.500 1593.500Z" fill="#505050"/></svg></div>

<div id="pan">
<div class="a" style="left:0;top:5px;width:30px;height:30px;background:#2a4a6b;border-radius:0 2px 2px 0"><svg width="30" height="30"><path d="M5 15L13 9V21ZM25 15L17 9V21Z" fill="#f0f0f0"/></svg></div>
<div class="a" style="right:8px;top:13px;font-size:10px;line-height:14px;color:#b0b0b0;text-decoration:underline">tar1090 on github (3.14.1767)</div>
<div class="a" style="left:11px;top:50px;line-height:17px;color:#a8a8a8"><span class="lb">Total Aircraft:</span> 1</div>
<div class="a" style="left:11px;top:84px;line-height:17px;color:#a8a8a8"><span class="lb">With Position:</span> 1</div>
<div class="a lb" style="left:11px;top:110px;line-height:17px">Stats available</div>
<div class="a" style="left:11px;top:125px;line-height:17px;font-weight:bold;color:#0000ee;text-decoration:underline">here</div>
<div class="a lb" style="left:152px;top:42px;line-height:17px">Messages:</div>
<div class="a" style="left:152px;top:57px;line-height:17px;color:#a8a8a8">1343.1/sec</div>
<div class="a" style="left:152px;top:76px;line-height:17px;color:#a8a8a8"><span class="lb">History:</span> 18728</div>
<div class="a" style="left:152px;top:91px;line-height:17px;color:#a8a8a8">positions</div>

<div class="a" style="left:9px;top:150px;width:282px;height:34px;background:#262626;border-radius:3px"></div>
<div class="a" style="left:11px;top:153px;width:70px;height:29px;line-height:29px;background:#3f7486;border-radius:3px;text-align:center;color:#c2dce2">Search</div>
<div class="a" style="left:84px;top:153px;width:65px;height:29px;line-height:29px;background:#2f2f2f;border-radius:3px;text-align:center">Filters</div>
<div class="a" style="left:151px;top:153px;width:83px;height:29px;line-height:29px;background:#2f2f2f;border-radius:3px;text-align:center">Columns</div>

<div class="a lb" style="left:14px;top:198px;line-height:17px">Search:</div>
<div class="inp" style="left:14px;top:213px"></div>
<div class="btn" style="left:127px;top:213px;width:60px;height:21px">Search</div>
<div class="btn" style="left:15px;top:234px;width:98px;height:21px">Clear Search</div>
<div class="a lb" style="left:14px;top:255px;line-height:17px">Jump to Airport or Latitude,</div>
<div class="a lb" style="left:14px;top:270px;line-height:17px">Longitude:</div>
<div class="inp" style="left:14px;top:285px"></div>
<div class="btn" style="left:127px;top:285px;width:48px;height:21px">Jump</div>
<div class="btn" style="left:180px;top:285px;width:49px;height:21px">Clear</div>

<div class="th" style="left:7px;width:20px"></div>
<div class="th" style="left:29px;width:53px">Callsign</div>
<div class="th" style="left:84px;width:67px">Route</div>
<div class="th" style="left:153px;width:35px">Type</div>
<div class="th" style="left:190px;width:53px">Squawk</div>
<div class="th" style="left:245px;width:48px">Alt. (ft)</div>
<div class="th" style="left:295px;width:5px"></div>
<div class="td" style="left:7px;width:20px"></div>
<div class="a" style="left:8px;top:352px;width:18px;height:6px;background:#f2f2f2"></div>
<div class="a" style="left:8px;top:358px;width:18px;height:6px;background:#dc143c"></div>
<div class="td" style="left:29px;width:53px;padding-left:1px;text-decoration:underline;color:#c8d4d8">LOT274</div>
<div class="td" style="left:84px;width:67px;text-align:center">LCY - VNO</div>
<div class="td" style="left:153px;width:35px;text-align:center">E190</div>
<div class="td" style="left:190px;width:53px;text-align:right;padding-right:2px">3426</div>
<div class="td" style="left:245px;width:48px;text-align:right;padding-right:2px">39000</div>
<div class="td" style="left:295px;width:5px"></div>

<div class="lg" style="left:7px;top:380px;width:50px;background:#2a5066">ADS-B</div>
<div class="lg" style="left:61px;top:380px;width:93px;background:#275f48">UAT / ADS-R</div>
<div class="lg" style="left:158px;top:380px;width:44px;background:#5c5230">MLAT</div>
<div class="lg" style="left:206px;top:380px;width:43px;background:#60283f">TIS-B</div>
<div class="lg" style="left:7px;top:403px;width:59px;background:#2c2c66">Mode-S</div>
<div class="lg" style="left:70px;top:403px;width:29px;background:#43213f">AIS</div>
<div class="lg" style="left:103px;top:403px;width:51px;background:#27603f">ADS-C</div>

<div class="a" style="left:0;top:429px;width:300px;height:15px;background:#f1f1f1"></div>
<div class="a" style="left:15px;top:431px;width:176px;height:11px;background:#bdbdbd"></div>
<svg class="a" style="left:0;top:429px" width="300" height="15"><path d="M10 4V11L5.500 7.500Z" fill="#a0a0a0"/><path d="M290 4V11L294.500 7.500Z" fill="#505050"/></svg>
</div>
</body></html>
